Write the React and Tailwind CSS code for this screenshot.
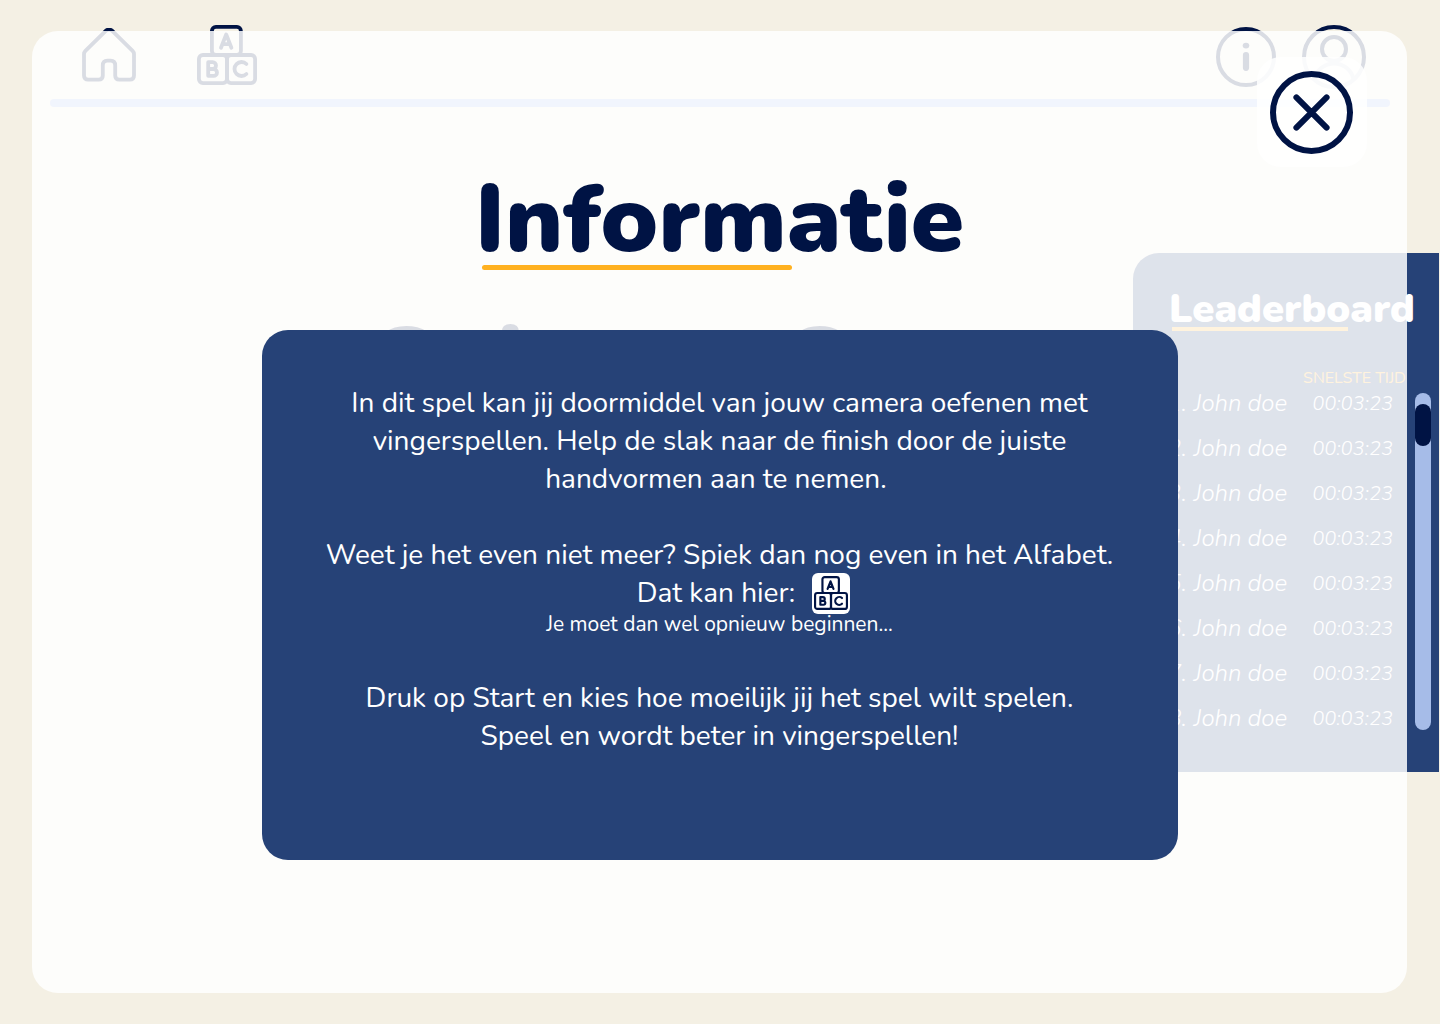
import React from "react";

const players = ["1", "2", "3", "4", "5", "6", "7", "8"];

function BlocksIcon({ className }) {
  return (
    <svg viewBox="0 0 60 60" className={className} fill="none" stroke="#001344" strokeWidth="3.8" strokeLinecap="round" strokeLinejoin="round" aria-hidden="true">
      <rect x="14.9" y="1.9" width="29" height="28.1" rx="4" />
      <rect x="1.9" y="30" width="28.1" height="28.1" rx="4" />
      <rect x="30" y="30" width="28.1" height="28.1" rx="4" />
      <path d="M24 22.8 L29.2 9.4 L34.4 22.8 M25.4 19.2 H33" />
      <path d="M11.2 37.2 V50.8 M11.2 37.2 H15.6 A3.4 3.4 0 0 1 15.6 44 H11.2 M15.6 44 H16.6 A3.4 3.4 0 0 1 16.6 50.8 H11.2" />
      <path d="M49.4 39 A7 7 0 1 0 49.4 49" />
    </svg>
  );
}

function HomeIcon() {
  return (
    <svg viewBox="0 0 54 54" className="size-[54px]" fill="none" stroke="#001344" strokeWidth="3.8" strokeLinejoin="round" aria-hidden="true">
      <path d="M2 26 C2 24.6 2.4 23.8 3.4 22.8 L24 2.6 Q27 0.4 30 2.6 L50.6 22.8 C51.6 23.8 52 24.6 52 26 V47.4 Q52 51.6 47.8 51.6 H37.4 Q33.2 51.6 33.2 47.4 V37.4 Q33.2 32.6 28.6 32.6 H25.4 Q20.8 32.6 20.8 37.4 V47.4 Q20.8 51.6 16.6 51.6 H6.2 Q2 51.6 2 47.4 Z" />
    </svg>
  );
}

function InfoIcon() {
  return (
    <svg viewBox="0 0 60 60" className="size-[60px]" fill="none" stroke="#001344" aria-hidden="true">
      <circle cx="30" cy="30" r="28" strokeWidth="4" />
      <ellipse cx="30" cy="18.6" rx="3.3" ry="2.9" fill="#001344" stroke="none" />
      <path d="M30 28 V40.8" strokeWidth="6.2" strokeLinecap="round" />
    </svg>
  );
}

function UserIcon() {
  return (
    <svg viewBox="0 0 64 64" className="size-16" fill="none" stroke="#001344" strokeWidth="4" aria-hidden="true">
      <circle cx="32" cy="32" r="30" />
      <circle cx="32" cy="24" r="12" />
      <path d="M12.5 54 A20 20 0 0 1 51.5 54" />
    </svg>
  );
}

function CloseIcon() {
  return (
    <svg viewBox="0 0 83 83" className="size-[83px]" fill="none" stroke="#001344" strokeWidth="6" strokeLinecap="round" aria-hidden="true">
      <circle cx="41.5" cy="41.5" r="38.5" />
      <path d="M26.4 26.4 L56.6 56.6 M56.6 26.4 L26.4 56.6" />
    </svg>
  );
}

function Header() {
  return (
    <header className="px-[50px] pt-6">
      <nav className="flex items-start justify-between pl-8 pr-6">
        <div className="flex items-start gap-[61px]">
          <a href="#home" aria-label="Home" className="pt-1"><HomeIcon /></a>
          <a href="#alfabet" aria-label="Alfabet" className="pt-px"><BlocksIcon className="size-[60px]" /></a>
        </div>
        <div className="flex items-start gap-[26px] pt-px">
          <button type="button" aria-label="Informatie" className="pt-0.5"><InfoIcon /></button>
          <button type="button" aria-label="Profiel"><UserIcon /></button>
        </div>
      </nav>
      <div className="mt-2.5 h-2 rounded-sm bg-[#a3baf0]" />
    </header>
  );
}

function Leaderboard() {
  return (
    <aside className="mr-px flex h-[519px] w-[306px] justify-between rounded-tl-[26px] bg-[#264277] pr-2 text-white">
      <div className="w-[273px] pl-8 pt-[29px]">
        <h2 className="pl-1 text-[40px] font-black leading-[55px]">Leaderboard</h2>
        <div className="-mt-2.5 ml-[7px] h-1 w-44 bg-[#ffb120]" />
        <table className="mt-11 w-full font-light italic">
          <thead>
            <tr>
              <th className="w-[29px] p-0"><span className="sr-only">Plaats</span></th>
              <th className="p-0"><span className="sr-only">Naam</span></th>
              <th className="h-1.5 whitespace-nowrap p-0 text-right text-base font-normal not-italic leading-[6px] text-[#ffb120]">SNELSTE TIJD</th>
            </tr>
          </thead>
          <tbody>
            {players.map((n) => (
              <tr key={n} className="h-[45px]">
                <td className="p-0 pl-0.5 text-2xl leading-[33px]">{n}.</td>
                <td className="whitespace-nowrap p-0 text-2xl leading-[33px]">John doe</td>
                <td className="p-0 pr-[13px] text-right text-xl leading-[33px]">00:03:23</td>
              </tr>
            ))}
          </tbody>
        </table>
      </div>
      <div className="mt-[140px] h-[337px] w-4 rounded-full bg-[#a6bce8] pt-[11px]">
        <div className="h-[42px] rounded-full bg-[#001344]" />
      </div>
    </aside>
  );
}

function InfoDialog() {
  return (
    <section role="dialog" aria-modal="true" aria-labelledby="info-title" className="absolute inset-x-8 bottom-[31px] top-[31px] mr-px flex flex-col items-center rounded-[26px] bg-white/85">
      <button type="button" aria-label="Sluiten" className="absolute right-10 top-[26px] flex size-[110px] items-center justify-center rounded-3xl bg-white/85 pr-px pt-px">
        <CloseIcon />
      </button>
      <div className="mt-[123px]">
        <h1 id="info-title" className="text-8xl font-black leading-[131px] text-[#001344]">Informatie</h1>
        <div className="-mt-5 ml-[7px] h-[5px] w-[310px] rounded-sm bg-[#ffb120]" />
      </div>
      <div className="ml-px mt-[60px] min-h-[530px] w-2/3 max-w-[916px] rounded-[26px] bg-[#264277] pl-10 pr-[41px] pt-[54px] text-center text-[28px] leading-[38px] text-white">
        <p>
          In dit spel kan jij doormiddel van jouw camera oefenen met
          <br />
          vingerspellen. Help de slak naar de finish door de juiste
          <br />
          handvormen aan te nemen.&nbsp;
        </p>
        <p className="mt-[38px]">Weet je het even niet meer? Spiek dan nog even in het Alfabet.</p>
        <div className="flex h-[38px] items-center justify-center gap-[17px] pl-12">
          <p>Dat kan hier:</p>
          <a href="#alfabet" aria-label="Alfabet" className="flex h-[41px] w-[38px] items-center justify-center rounded-md bg-white">
            <BlocksIcon className="size-[34px]" />
          </a>
        </div>
        <p className="text-[21px] leading-[25px]">Je moet dan wel opnieuw beginnen...</p>
        <p className="mt-[42px]">
          Druk op Start en kies hoe moeilijk jij het spel wilt spelen.
          <br />
          Speel en wordt beter in vingerspellen!
        </p>
      </div>
    </section>
  );
}

export default function App() {
  return (
    <div className="relative min-h-screen overflow-hidden bg-[#f4f0e4] font-['Nunito','Open_Sans',sans-serif] text-[#001344]">
      <Header />
      <main className="flex justify-end pt-[146px]">
        <p aria-hidden="true" className="flex-1 whitespace-nowrap pl-[372px] pt-[61px] text-[100px] font-extrabold leading-none">Spinnen Spaces</p>
        <Leaderboard />
      </main>
      <InfoDialog />
    </div>
  );
}
